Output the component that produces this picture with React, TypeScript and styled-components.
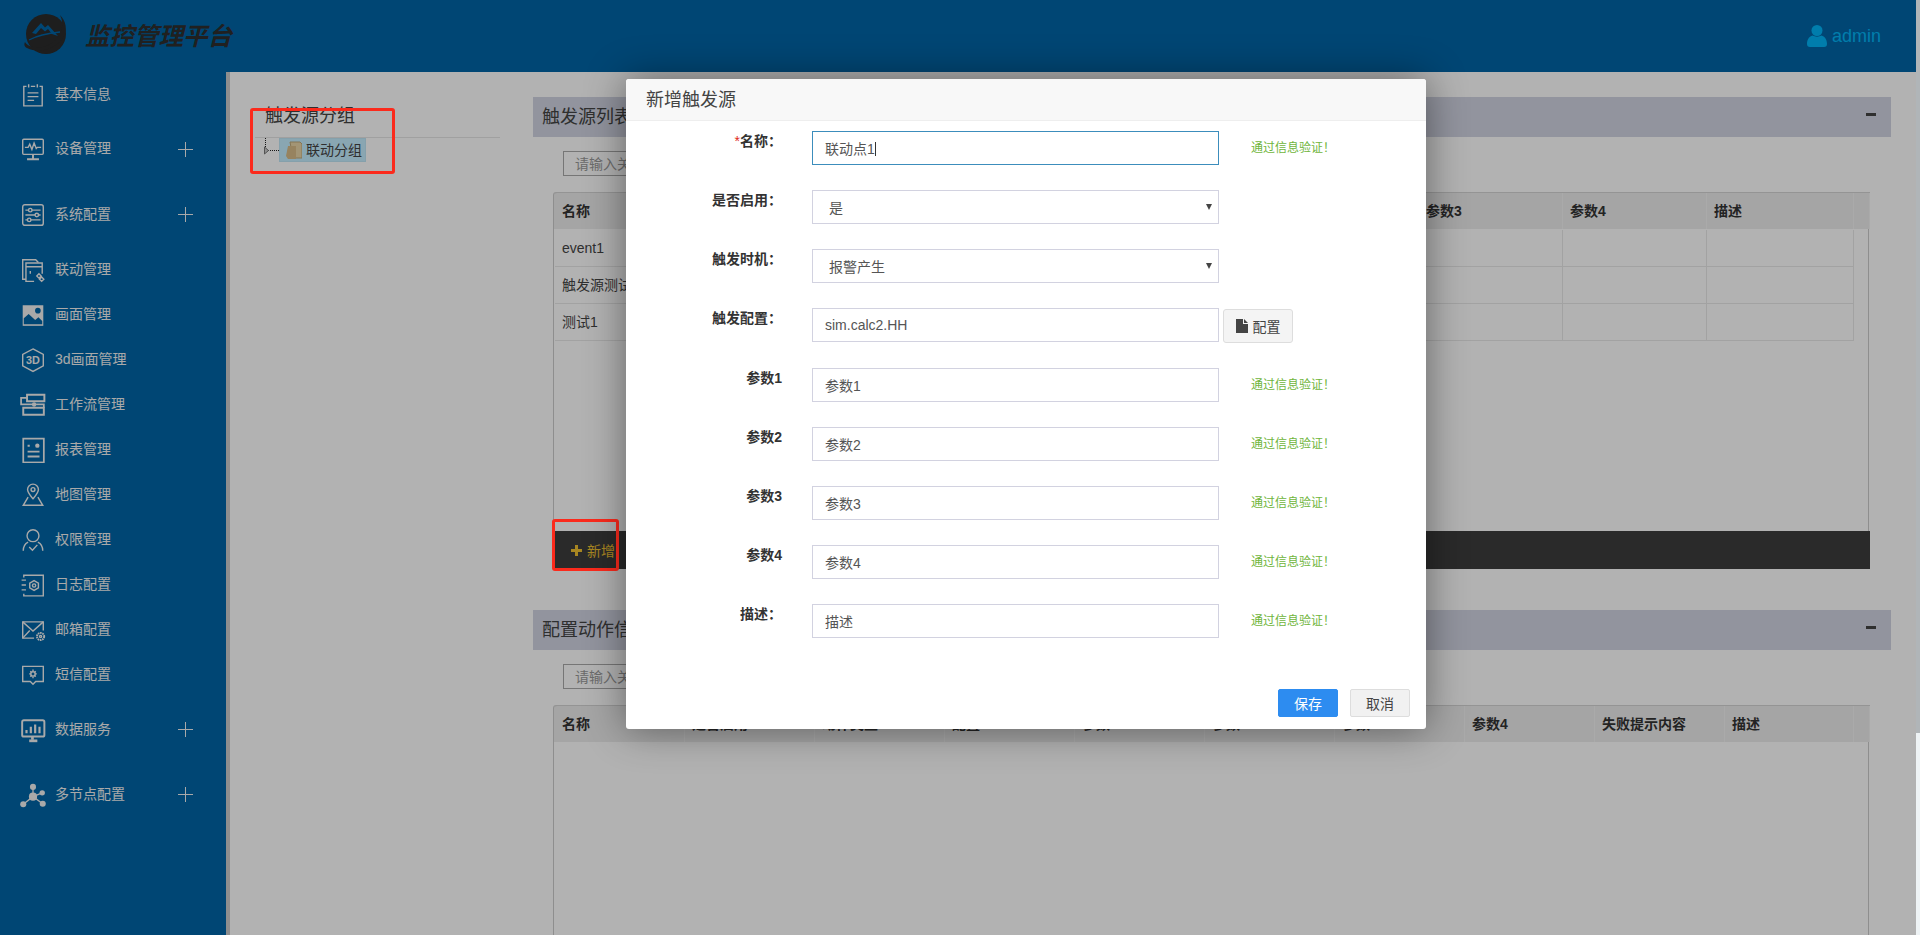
import React from "react";
import styled, { createGlobalStyle } from "styled-components";

const FONT = `"Liberation Sans", "Noto Sans CJK SC", sans-serif`;
const COLON = "\uFF1A";
const BANG = "\uFF01";

const Global = createGlobalStyle`
  html, body { margin: 0; padding: 0; overflow: hidden; background: #eef3f5; }
  * { box-sizing: border-box; }
  body { font-family: ${FONT}; font-size: 14px; }
`;

const Root = styled.div`
  position: relative; display: flex; width: 1920px; height: 935px; overflow: hidden;
`;
const Page = styled.div`
  position: relative; display: flex; flex-direction: column; width: 1916px; height: 935px; background: #fff;
`;
const EdgeStrip = styled.div`
  display: flex; flex-direction: column; width: 4px; height: 935px;
`;
const EdgeTop = styled.div`height: 733px; background: #b0b5b8;`;
const EdgeBottom = styled.div`flex: 1; background: #eef3f5;`;
const Backdrop = styled.div`
  position: absolute; inset: 0; background: rgba(0, 0, 0, 0.3); z-index: 10;
`;

/* header */
const Header = styled.header`
  display: flex; align-items: center; height: 72px; flex: none; background: #0065a7; padding: 0 35px 0 22px;
`;
const Logo = styled.svg`width: 48px; height: 44px; flex: none; margin-top: -3px;`;
const Brand = styled.div`
  margin-left: 15px; font-size: 24.5px; font-style: italic; font-weight: 700; color: #2e2e2e; line-height: 30px; margin-top: 2px;
`;
const UserBox = styled.div`
  margin-left: auto; display: flex; align-items: center; gap: 5px; color: #00b4f6; font-size: 18px;
`;
const UserIcon = styled.svg`width: 20px; height: 22px; flex: none;`;

/* layout */
const Body = styled.div`display: flex; flex: 1; min-height: 0;`;
const Sidebar = styled.nav`
  width: 230px; flex: none; background: #0065a7; border-right: 4px solid #ccc;
`;
const NavRow = styled.div<{ $h: number }>`
  display: flex; align-items: center; height: ${p => p.$h}px; padding-left: 20px; color: #f2f2f2;
`;
const NavGlyph = styled.svg`
  width: 26px; height: 26px; flex: none; fill: none; stroke: currentColor; stroke-width: 1.3; margin-top: 2px;
`;
const NavText = styled.span`margin-left: 9px; font-size: 14px; line-height: 20px;`;
const NavPlus = styled.span`
  position: relative; margin-left: auto; margin-right: 33px; width: 15px; height: 15px; margin-top: 2px;
  &::before { content: ""; position: absolute; left: 7px; top: 0; width: 1px; height: 15px; background: #f2f2f2; }
  &::after { content: ""; position: absolute; left: 0; top: 7px; width: 15px; height: 1px; background: #f2f2f2; }
`;

const TreePane = styled.aside`
  width: 303px; flex: none; padding: 25px 33px 0 25px;
`;
const TreeTitle = styled.div`
  height: 41px; padding-left: 10px; font-size: 18px; line-height: 38px; color: #444; border-bottom: 1px solid #e6e6e6;
`;
const TreeRow = styled.div`display: flex; align-items: center; height: 24px; padding-left: 9px;`;
const TreeLines = styled.svg`width: 15px; height: 24px; flex: none;`;
const TreeNode = styled.div`
  display: flex; align-items: center; height: 24px; width: 87px; padding-left: 5px; gap: 4px; line-height: 22px;
  background: #c4eeff; border: 1px solid #bfe6f5; color: #444; font-size: 14px;
`;
const TreeFolder = styled.svg`width: 17px; height: 18px; flex: none;`;

const Content = styled.main`
  flex: 1; min-width: 0; display: flex; flex-direction: column; padding: 25px 25px 0 0;
`;
const SectionBar = styled.div<{ $gap?: number }>`
  display: flex; align-items: center; justify-content: space-between; height: 40px; flex: none;
  margin-top: ${p => p.$gap ?? 0}px;
  padding: 0 15px 6px 9px; background: #d1d5e3; color: #444; font-size: 18px;
  & > span { margin-top: 2px; }
`;
const Minus = styled.i`display: block; width: 10px; height: 3px; background: #444;`;
const SearchBox = styled.input`
  display: block; flex: none; width: 300px; height: 25px; margin: 14px 0 16px 30px; padding: 0 11px;
  border: 1px solid #aaa; background: #fff; font: 14px ${FONT}; outline: none;
  &::placeholder { color: #9a9a9a; opacity: 1; }
`;
const TableBox = styled.div<{ $h?: number }>`
  display: flex; flex-direction: column; margin-left: 20px; width: 1317px; flex: ${p => (p.$h ? "none" : "1")};
  height: ${p => (p.$h ? `${p.$h}px` : "auto")}; min-height: 0;
`;
const HeadRow = styled.div<{ $cols: string }>`
  display: grid; grid-template-columns: ${p => p.$cols} 1fr; flex: none; height: 37px; padding-left: 2px;
  background: #ececec; border-top: 1px solid #d4d4d4; border-radius: 3px 0 0 0;
  box-shadow: inset 1px 0 0 #ccc;
`;
const HeadCell = styled.div`
  padding: 0 8px 0 7px; font-weight: 700; font-size: 14px; line-height: 36px; color: #333; white-space: nowrap;
  overflow: hidden; border-right: 1px solid #f4f4f4;
`;
const GridBody = styled.div`
  flex: 1; min-height: 0; width: 1316px; padding: 1px 0 0 1px; border-left: 1px solid #ccc; border-right: 1px solid #ccc; overflow: hidden;
`;
const DataRow = styled.div<{ $cols: string }>`
  display: grid; grid-template-columns: ${p => p.$cols}; height: 37px;
`;
const DataCell = styled.div`
  padding: 0 8px 0 7px; line-height: 36px; font-size: 14px; color: #444; white-space: nowrap; overflow: hidden;
  border-right: 1px solid #e8e8e8; border-bottom: 1px solid #e8e8e8;
`;
const ActionBar = styled.div`
  display: flex; align-items: center; flex: none; height: 38px; padding-left: 18px; background: #3d3d3d; color: #f0c030; font-size: 14px;
`;
const AddText = styled.span`margin-left: 5px;`;
const AddGlyph = styled.svg`width: 11px; height: 11px; fill: currentColor; flex: none;`;

/* annotation */
const RedMark = styled.div<{ $x: number; $y: number; $w: number; $h: number }>`
  position: absolute; z-index: 15; left: ${p => p.$x}px; top: ${p => p.$y}px; width: ${p => p.$w}px; height: ${p => p.$h}px;
  border: 3px solid #fb2a1c; border-radius: 3px;
`;

/* modal */
const Modal = styled.section`
  position: absolute; z-index: 20; left: 626px; top: 79px; width: 800px; height: 650px; display: flex; flex-direction: column;
  background: #fff; border-radius: 3px; box-shadow: 0 0 40px rgba(0, 0, 0, 0.45);
`;
const ModalHead = styled.div`
  height: 42px; flex: none; padding-left: 20px; background: #f8f8f8; border-bottom: 1px solid #eee;
  font-size: 18px; line-height: 43px; color: #444; border-radius: 3px 3px 0 0;
`;
const Form = styled.form`padding-top: 10px; flex: 1;`;
const FieldRow = styled.div`display: flex; align-items: flex-start; min-height: 34px; margin-bottom: 25px;`;
const FieldLabel = styled.label`
  width: 156px; flex: none; text-align: right; font-size: 14px; font-weight: 700; line-height: 20px; color: #333;
`;
const Star = styled.b`color: #e02a20; font-weight: 400;`;
const FieldBox = styled.div`position: relative; width: 407px; margin-left: 30px; flex: none;`;
const TextInput = styled.input<{ $focus?: boolean }>`
  display: block; width: 100%; height: 34px; padding: 0 12px; font: 14px ${FONT}; color: #555; background: #fff; outline: none;
  border: 1px solid ${p => (p.$focus ? "#3c8dbc" : "#d2d2e0")};
`;
const Caret = styled.i`position: absolute; left: 63px; top: 11px; width: 1px; height: 14px; background: #333;`;
const Select = styled.select`
  display: block; width: 100%; height: 34px; padding: 2px 16px 0; font: 14px ${FONT}; color: #555; background: #fff; outline: none;
  border: 1px solid #d2d2e0; border-radius: 0; appearance: none;
`;
const SelectArrow = styled.i`
  position: absolute; right: 7px; top: 14px; width: 0; height: 0; pointer-events: none;
  border-left: 3px solid transparent; border-right: 3px solid transparent; border-top: 6px solid #444;
`;
const Hint = styled.span`margin-left: 32px; height: 34px; font-size: 12px; line-height: 35px; color: #6fb53c;`;
const ConfigButton = styled.button`
  display: flex; align-items: center; justify-content: center; gap: 5px; width: 70px; height: 34px; margin: 1px 0 0 4px; padding: 0;
  background: #f4f4f4; border: 1px solid #ddd; border-radius: 3px; color: #444; font: 14px ${FONT};
`;
const FileGlyph = styled.svg`width: 12px; height: 14px; fill: #444; flex: none;`;
const ModalFoot = styled.div`display: flex; justify-content: flex-end; gap: 12px; padding: 0 16px 12px;`;
const FootButton = styled.button<{ $primary?: boolean }>`
  width: 60px; height: 28px; padding: 0; font: 14px ${FONT}; border-radius: 2px;
  border: 1px solid ${p => (p.$primary ? "#2d8cf0" : "#ddd")};
  background: ${p => (p.$primary ? "#2d8cf0" : "#f1f1f1")};
  color: ${p => (p.$primary ? "#fff" : "#444")};
`;

/* icons */
const Filled = { fill: "currentColor", stroke: "none" } as const;
const icons: Record<string, React.ReactNode> = {
  clipboard: (<>
    <path d="M6 4H3.5v18h17V4H18" /><path d="M8 2v3M16 2v3M10 4h4" />
    <path d="M7 10h10M7 13.5h10M7 17h6" /></>),
  monitor: (<>
    <rect x="2.5" y="3" width="19" height="14" rx="1" /><path d="M12 17v4M6.5 21.5h11" strokeWidth="1.8" />
    <path d="M4.5 10.5h3l1.5-3 2 5 2-6 2 5 1-1h3.5" /></>),
  sliders: (<>
    <rect x="2.5" y="2.5" width="19" height="19" rx="2" /><path d="M5 7.5h3M11 7.5h8M5 12h9M17 12h2M5 16.5h2M10 16.5h9" />
    <circle cx="9.5" cy="7.5" r="1.6" /><circle cx="15.5" cy="12" r="1.6" /><circle cx="8.5" cy="16.5" r="1.6" /></>),
  link: (<>
    <path d="M5.5 20.5H2.5V2.5h12l2.5 2.5" /><path d="M13 22.5H5.5V5.5h15v10" /><path d="M5.5 9h15M9.5 13v2.5" />
    <path d="M15.5 17.5l2-2 2 2-2 2zM18 20.5l2-2 2 2-2 2z" /></>),
  image: (<>
    <rect x="2.5" y="3" width="19" height="19" {...Filled} />
    <circle cx="16.5" cy="8" r="2.6" fill="#0065a7" stroke="none" />
    <path d="M3.5 20.5V15l4.500-4 6 5.500 3-2.500 3.500 3.500v3z" fill="#0065a7" stroke="none" /></>),
  cube: (<>
    <path d="M12 1.8l9.500 5v10.600L12 22.600l-9.500-5.200V6.800z" />
    <text x="12" y="16" textAnchor="middle" fontSize="10" fontWeight="700" fill="currentColor" stroke="none" fontFamily="Liberation Sans">3D</text></>),
  flow: (<>
    <path d="M6.500 2.500h16v6h-16zM3 14.500h19v6.500H3z" strokeWidth="1.800" /><path d="M6.500 5.500H1v6h21v3" strokeWidth="1.600" />
    <circle cx="13" cy="11.500" r="2" {...Filled} /></>),
  report: (<>
    <rect x="3" y="1.500" width="19" height="22" strokeWidth="1.600" /><circle cx="16" cy="8" r="2" {...Filled} />
    <path d="M7 8h2M7 13.500h11M7 18h11" strokeWidth="1.800" /></>),
  pin: (<>
    <path d="M12 15.500c-3-3.500-5-5.600-5-8.500a5 5 0 0110 0c0 2.900-2 5-5 8.500z" /><circle cx="12" cy="7" r="1.800" />
    <path d="M7.500 14L3 21.500h18L16.500 14" /></>),
  user: (<>
    <circle cx="12" cy="8" r="5.500" /><path d="M3 22c0-4 1.500-6.500 4.500-8M21 22c0-4-1.500-6.500-4.500-8" />
    <path d="M8.500 18.500l3 3 4.500-5" /></>),
  book: (<>
    <path d="M3.500 5V3h18v19h-18v-2" /><path d="M1.500 7.500h4M1.500 12h4M1.500 16.500h4" />
    <path d="M13 8l4 2.300v4.400L13 17l-4-2.300v-4.400z" /><circle cx="13" cy="12.500" r="1.500" /></>),
  mail: (<>
    <path d="M13 19.500H2.500V4.500h19v8" /><path d="M2.500 4.500L12 13l9.500-8.500M2.500 19.500l6.500-7" />
    <circle cx="19" cy="18" r="3.300" strokeWidth="1.800" strokeDasharray="1.500 .6" /><circle cx="19" cy="18" r="1" /></>),
  message: (<>
    <path d="M2.500 4h19v14h-7l-2.500 2.500L9.500 18h-7z" /><circle cx="12" cy="11" r="2" />
    <path d="M12 7v1.500M12 13.500V15M8.500 11H10M14 11h1.500M9.500 8.500l1 1M13.500 12.500l1 1M14.500 8.500l-1 1M10.500 12.500l-1 1" /></>),
  bars: (<>
    <rect x="2" y="3" width="20.500" height="15" rx="1.500" strokeWidth="1.800" /><path d="M8.500 22h7.500" strokeWidth="2.500" /><path d="M11.500 18.500v2.500" strokeWidth="2.500" />
    <path d="M6 15v-3M10 15V9M14 15V7M18 15v-6" strokeWidth="2" /></>),
  nodes: (<>
    <g {...Filled}><circle cx="12" cy="13.500" r="3.800" /><circle cx="12" cy="4.500" r="2.800" /><circle cx="20.500" cy="10" r="2.500" /><circle cx="21" cy="20" r="2.800" /><circle cx="3" cy="20.500" r="2.800" /></g>
    <path d="M12 4.500v9M12 13.500L20.500 10M12 13.500l9 6.500M12 13.500L3 20.500" strokeWidth="1.200" /></>),
};

const navItems = [
  { label: "基本信息", icon: "clipboard", h: 43 },
  { label: "设备管理", icon: "monitor", h: 66, plus: true },
  { label: "系统配置", icon: "sliders", h: 65, plus: true },
  { label: "联动管理", icon: "link", h: 45 },
  { label: "画面管理", icon: "image", h: 45 },
  { label: "3d画面管理", icon: "cube", h: 45 },
  { label: "工作流管理", icon: "flow", h: 45 },
  { label: "报表管理", icon: "report", h: 45 },
  { label: "地图管理", icon: "pin", h: 45 },
  { label: "权限管理", icon: "user", h: 45 },
  { label: "日志配置", icon: "book", h: 45 },
  { label: "邮箱配置", icon: "mail", h: 45 },
  { label: "短信配置", icon: "message", h: 45 },
  { label: "数据服务", icon: "bars", h: 65, plus: true },
  { label: "多节点配置", icon: "nodes", h: 65, plus: true },
];

const triggerCols = "repeat(8, 144px) 147px";
const actionCols = "repeat(9, 130px) 129px";
const triggerHead = ["名称", "是否启用", "触发时机", "触发配置", "参数1", "参数2", "参数3", "参数4", "描述"];
const actionHead = ["名称", "是否启用", "动作类型", "配置", "参数1", "参数2", "参数3", "参数4", "失败提示内容", "描述"];
const triggerRows = [
  ["event1", "是", "报警产生", "sim.calc1.HH"],
  ["触发源测试", "是", "报警产生", "sim.calc1.H"],
  ["测试1", "是", "报警产生", "sim.calc1.L"],
];

const params = ["参数1", "参数2", "参数3", "参数4"];
const PASS = `通过信息验证${BANG}`;

const noop = () => {};

export default function App() {
  return (
    <Root>
      <Global />
      <Page>
        <Header>
          <Logo viewBox="0 0 48 44">
            <circle cx="24" cy="21" r="20" fill="#2b2b2b" />
            <path d="M10 20l9-10 4 4.500 3-2.500 10 11-6-2-4-5-3 2.500-4-3.500-5 6z" fill="#0065a7" />
            <path d="M7 27c9-5 20-7 31-8" fill="none" stroke="#0065a7" strokeWidth="1.300" />
            <path d="M38 2c6 6 8 15 3 23-6 9-22 17-36 10-3-1.500-3-4-2-6 2 5 16 9 27 1 9-6 13-18 8-28z" fill="#2b2b2b" />
          </Logo>
          <Brand>监控管理平台</Brand>
          <UserBox>
            <UserIcon viewBox="0 0 20 22" fill="currentColor">
              <circle cx="10" cy="5.500" r="5.500" />
              <path d="M0 19c0-5 2.500-7.500 5.500-8.500 2.500 1.500 6.500 1.500 9 0 3 1 5.500 3.500 5.500 8.500 0 2-1 3-3 3H3c-2 0-3-1-3-3z" />
            </UserIcon>
            admin
          </UserBox>
        </Header>
        <Body>
          <Sidebar>
            {navItems.map(item => (
              <NavRow key={item.label} $h={item.h}>
                <NavGlyph viewBox="0 0 24 24">{icons[item.icon]}</NavGlyph>
                <NavText>{item.label}</NavText>
                {item.plus && <NavPlus />}
              </NavRow>
            ))}
          </Sidebar>
          <TreePane>
            <TreeTitle>触发源分组</TreeTitle>
            <TreeRow>
              <TreeLines viewBox="0 0 15 24">
                <path d="M1.500 0v9M4 12.500h11" stroke="#222" strokeDasharray="1 1" fill="none" />
                <path d="M0.500 9l4 3.500-4 3.500z" fill="#ccc" stroke="#777" />
              </TreeLines>
              <TreeNode>
                <TreeFolder viewBox="0 0 17 18">
                  <path d="M5 1h10l2 2v14H8z" fill="#ead6a8" stroke="#bfa878" />
                  <path d="M1 15l2-10h8v13H3z" fill="#d8bc88" />
                </TreeFolder>
                联动分组
              </TreeNode>
            </TreeRow>
          </TreePane>
          <Content>
            <SectionBar>
              <span>触发源列表</span>
              <Minus />
            </SectionBar>
            <SearchBox placeholder="请输入关键字" readOnly />
            <TableBox $h={377}>
              <HeadRow $cols={triggerCols}>
                {triggerHead.map(t => <HeadCell key={t}>{t}</HeadCell>)}
                <HeadCell />
              </HeadRow>
              <GridBody>
                {triggerRows.map(row => (
                  <DataRow key={row[0]} $cols={triggerCols}>
                    {triggerHead.map((_, i) => <DataCell key={i}>{row[i] ?? ""}</DataCell>)}
                  </DataRow>
                ))}
              </GridBody>
              <ActionBar>
                <AddGlyph viewBox="0 0 11 11"><path d="M4 0h3v4h4v3H7v4H4V7H0V4h4z" /></AddGlyph>
                <AddText>新增</AddText>
              </ActionBar>
            </TableBox>
            <SectionBar $gap={41}>
              <span>配置动作信息</span>
              <Minus />
            </SectionBar>
            <SearchBox placeholder="请输入关键字" readOnly />
            <TableBox>
              <HeadRow $cols={actionCols}>
                {actionHead.map(t => <HeadCell key={t}>{t}</HeadCell>)}
                <HeadCell />
              </HeadRow>
              <GridBody />
            </TableBox>
          </Content>
        </Body>
        <Backdrop />
      </Page>
      <EdgeStrip>
        <EdgeTop />
        <EdgeBottom />
      </EdgeStrip>

      <RedMark $x={250} $y={108} $w={145} $h={66} />
      <RedMark $x={552} $y={519} $w={67} $h={52} />

      <Modal>
        <ModalHead>新增触发源</ModalHead>
        <Form>
          <FieldRow>
            <FieldLabel><Star>*</Star>{`名称${COLON}`}</FieldLabel>
            <FieldBox>
              <TextInput $focus value="联动点1" onChange={noop} />
              <Caret />
            </FieldBox>
            <Hint>{PASS}</Hint>
          </FieldRow>
          <FieldRow>
            <FieldLabel>{`是否启用${COLON}`}</FieldLabel>
            <FieldBox>
              <Select defaultValue="是"><option>是</option><option>否</option></Select>
              <SelectArrow />
            </FieldBox>
          </FieldRow>
          <FieldRow>
            <FieldLabel>{`触发时机${COLON}`}</FieldLabel>
            <FieldBox>
              <Select defaultValue="报警产生"><option>报警产生</option><option>报警恢复</option></Select>
              <SelectArrow />
            </FieldBox>
          </FieldRow>
          <FieldRow>
            <FieldLabel>{`触发配置${COLON}`}</FieldLabel>
            <FieldBox><TextInput value="sim.calc2.HH" onChange={noop} /></FieldBox>
            <ConfigButton type="button">
              <FileGlyph viewBox="0 0 12 14"><path d="M0 0h7v5h5v9H0zM8 0l4 4H8z" /></FileGlyph>
              配置
            </ConfigButton>
          </FieldRow>
          {params.map(p => (
            <FieldRow key={p}>
              <FieldLabel>{p}</FieldLabel>
              <FieldBox><TextInput value={p} onChange={noop} /></FieldBox>
              <Hint>{PASS}</Hint>
            </FieldRow>
          ))}
          <FieldRow>
            <FieldLabel>{`描述${COLON}`}</FieldLabel>
            <FieldBox><TextInput value="描述" onChange={noop} /></FieldBox>
            <Hint>{PASS}</Hint>
          </FieldRow>
        </Form>
        <ModalFoot>
          <FootButton type="button" $primary>保存</FootButton>
          <FootButton type="button">取消</FootButton>
        </ModalFoot>
      </Modal>
    </Root>
  );
}
